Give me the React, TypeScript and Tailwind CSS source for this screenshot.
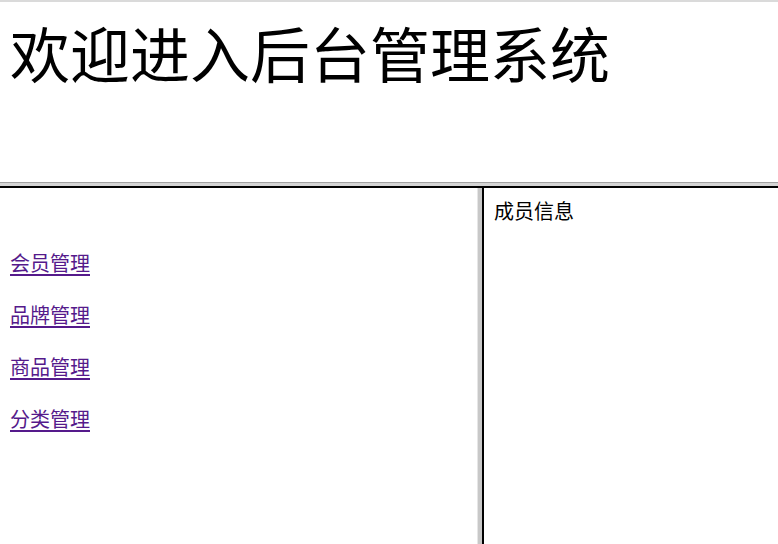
const links = ["会员管理", "品牌管理", "商品管理", "分类管理"];

export default function App() {
  return (
    <div
      className="flex h-screen w-full flex-col overflow-hidden bg-white text-black"
      style={{ fontFamily: '"Noto Sans CJK SC", "Noto Sans", sans-serif' }}
    >
      {/* top frame */}
      <div className="h-[182px] shrink-0 border-t-2 border-[#dadada] pl-[10px] pt-[20px]">
        <h1 className="text-[60px] font-normal leading-[60px] tracking-[0px]">欢迎进入后台管理系统</h1>
      </div>
      {/* horizontal frame border */}
      <div className="h-[6px] shrink-0 border-t border-b-2 border-t-[#a0a0a0] border-b-black bg-[#d4d4d4]" />
      {/* bottom frames */}
      <div className="flex min-h-0 flex-1">
        <div className="flex w-[477px] shrink-0 flex-col items-start gap-[26px] pl-[10px] pt-[62px] text-[20px] leading-[26px]">
          {links.map((l) => (
            <a key={l} href="#" className="text-[#551a8b] underline underline-offset-[3px]">
              {l}
            </a>
          ))}
        </div>
        <div className="flex w-[7px] shrink-0">
          <div className="w-px bg-[#e6e6e6]" />
          <div className="w-[4px] bg-[#c8c8c8]" />
          <div className="w-[2px] bg-black" />
        </div>
        <div className="flex-1 pl-[10px] pt-[10px] text-[20px] leading-[26px]">成员信息</div>
      </div>
    </div>
  );
}
